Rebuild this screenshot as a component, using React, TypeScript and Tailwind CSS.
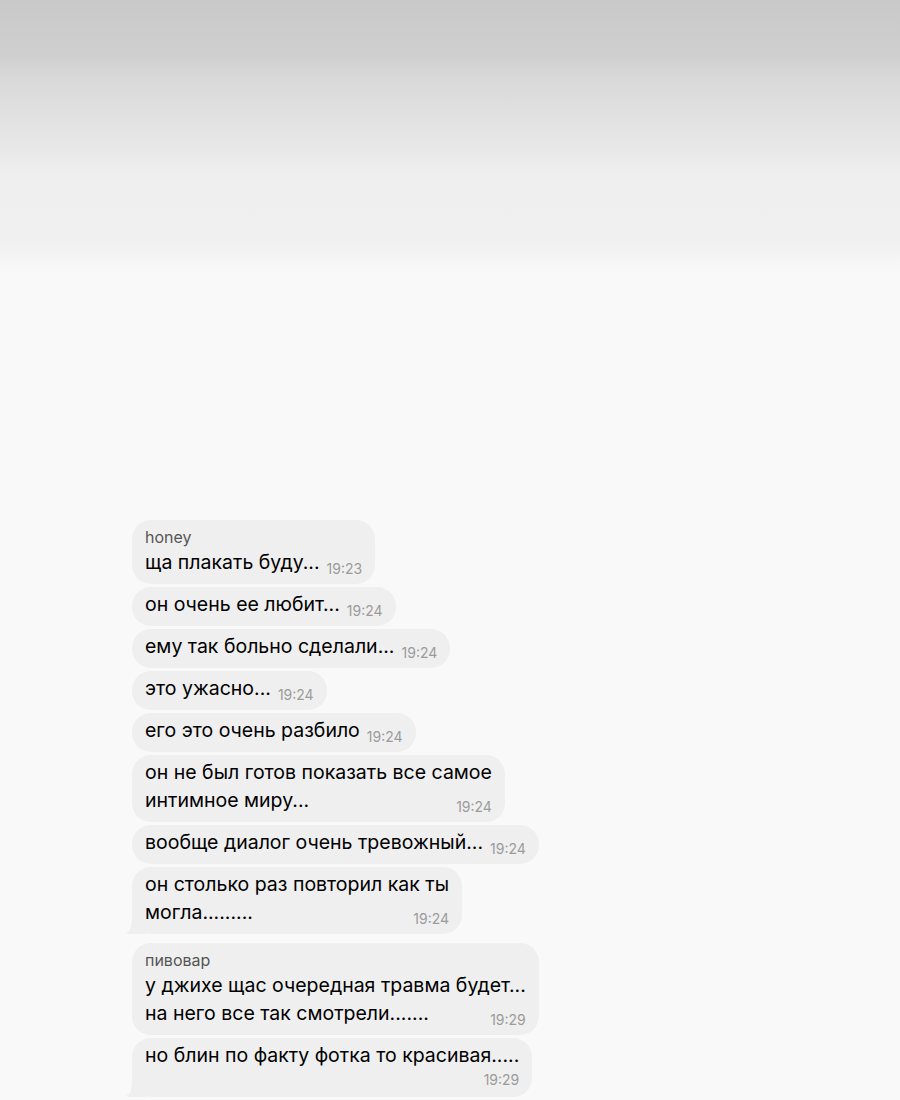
import React from 'react';

type Msg = {
  name?: string;
  lines: string[];
  time: string;
  timeOwnRow?: boolean;
  tail?: boolean;
  gapAfter?: boolean;
};

const messages: Msg[] = [
  { name: 'honey', lines: ['ща плакать буду...'], time: '19:23' },
  { lines: ['он очень ее любит...'], time: '19:24' },
  { lines: ['ему так больно сделали...'], time: '19:24' },
  { lines: ['это ужасно...'], time: '19:24' },
  { lines: ['его это очень разбило'], time: '19:24' },
  { lines: ['он не был готов показать все самое', 'интимное миру...'], time: '19:24' },
  { lines: ['вообще диалог очень тревожный...'], time: '19:24' },
  { lines: ['он столько раз повторил как ты', 'могла.........'], time: '19:24', tail: true, gapAfter: true },
  { name: 'пивовар', lines: ['у джихе щас очередная травма будет...', 'на него все так смотрели.......'], time: '19:29' },
  { lines: ['но блин по факту фотка то красивая.....'], time: '19:29', timeOwnRow: true, tail: true },
];

function Tail() {
  return (
    <svg className="absolute -left-[6px] bottom-0" width="20" height="18" viewBox="0 0 20 18">
      <path d="M20 0 L20 18 L6 18 C3 18 1 17.5 0 17 C4 15 6 12 6 0 Z" fill="#efefef" />
    </svg>
  );
}

function Bubble({ m }: { m: Msg }) {
  const last = m.lines.length - 1;
  return (
    <div className={`relative self-start ${m.gapAfter ? 'mb-[9px]' : 'mb-[3px]'}`}>
      {m.tail && <Tail />}
      <div
        className={`relative rounded-[19px] bg-[#efefef] px-[13px] pt-[4px] text-[19.5px] leading-[27px] text-black ${
          m.timeOwnRow ? 'pb-[7px]' : 'pb-[8px]'
        }`}
      >
        {m.name && (
          <div className="text-[16px] leading-[20px] text-[#555] pt-[3px] pb-[2px]">{m.name}</div>
        )}
        {m.lines.map((l, i) =>
          i === last && !m.timeOwnRow ? (
            <div
              key={i}
              className={`flex items-end justify-between gap-[7px] ${i > 0 ? 'h-[28px] pt-[1px]' : 'h-[27px]'}`}
            >
              <span className="whitespace-nowrap leading-[27px]">{l}</span>
              <span className="-mb-[2px] text-[14px] leading-[18px] text-[#9b9b9b] whitespace-nowrap">{m.time}</span>
            </div>
          ) : (
            <div key={i} className="whitespace-nowrap">{l}</div>
          )
        )}
        {m.timeOwnRow && (
          <div className="flex justify-end text-[14px] leading-[21px] text-[#9b9b9b]">{m.time}</div>
        )}
      </div>
    </div>
  );
}

export default function App() {
  return (
    <div
      className="h-[1100px] w-[900px] overflow-hidden bg-[linear-gradient(to_bottom,#c9c9c9_0px,#cfcfcf_55px,#d9d9d9_80px,#e2e2e2_120px,#e8e8e8_150px,#efefef_175px,#f0f0f0_240px,#f9f9f9_275px,#f9f9f9_100%)] pt-[520px] pl-[132px]"
      style={{ fontFamily: 'Inter, "Liberation Sans", Arial, sans-serif' }}
    >
      <div className="flex flex-col">
        {messages.map((m, i) => (
          <Bubble key={i} m={m} />
        ))}
      </div>
    </div>
  );
}
